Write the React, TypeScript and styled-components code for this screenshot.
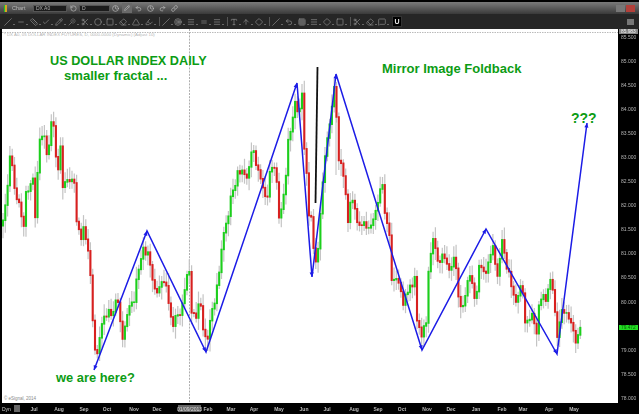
import { Fragment } from "react";
import styled, { createGlobalStyle } from "styled-components";
import {
  ArrowUp, Check, Circle, Clock, Diamond, Equal, Eraser, Grid3x3, Highlighter, Link, Menu, MessageSquare,
  Minus, Pencil, Redo2, RotateCcw, Ruler, Scissors, Slash, Square, Target, Triangle, Type, Undo2, Wand,
} from "lucide-react";

const GlobalStyle = createGlobalStyle`
  html, body { margin: 0; padding: 0; background: #000; overflow: hidden; }
`;

const Page = styled.div`
  width: 639px;
  height: 414px;
  display: flex;
  flex-direction: column;
  font-family: "Liberation Sans", Arial, sans-serif;
  background: #000;
  overflow: hidden;
`;

const TitleBar = styled.div`
  height: 12px;
  margin-top: 2px;
  display: flex;
  align-items: center;
  padding: 0 3px 0 4px;
  background: linear-gradient(#7a7a7a, #3a3a3a);
  filter: blur(0.3px);
`;

const ChartBadge = styled.span`
  width: 3px;
  height: 7px;
  margin-right: 5px;
  background: linear-gradient(90deg, #1fc52a 50%, #d9a521 50%);
`;

const ChartName = styled.span`
  width: 21px;
  font-size: 5.5px;
  color: #b8b8b8;
`;

const Field = styled.span<{ $w: number }>`
  width: ${({ $w }) => $w}px;
  height: 7px;
  box-sizing: border-box;
  padding-left: 2px;
  display: flex;
  align-items: center;
  font-size: 5px;
  color: #b0b0b0;
  background: #1c1c1c;
  border: 1px solid #555;
`;

const BarIcon = styled.span<{ $w: number; $on?: boolean }>`
  width: ${({ $w }) => $w}px;
  height: 10px;
  display: flex;
  align-items: center;
  justify-content: center;
  color: #c8c8c8;
  background: ${({ $on }) => ($on ? "#6a6a6a" : "transparent")};
`;

const Spacer = styled.span`
  flex: 1;
`;

const WinButton = styled.span<{ $close?: boolean }>`
  width: 9px;
  height: 7px;
  margin-right: 1px;
  background: ${({ $close }) => ($close ? "#b3403a" : "#777")};
`;

const ToolRow = styled.div`
  height: 15px;
  display: flex;
  align-items: center;
  padding-left: 4px;
  background: #262626;
  filter: blur(0.3px);
`;

const Tool = styled.span`
  width: 12.8px;
  height: 10px;
  flex: none;
  display: flex;
  align-items: center;
  color: #9a9a9a;
`;

const Caret = styled.i`
  width: 0;
  height: 0;
  margin: 5px 0 0 1px;
  border-left: 1px solid transparent;
  border-right: 1px solid transparent;
  border-top: 1.5px solid #aaa;
`;

const ToolDivider = styled.span`
  width: 1px;
  height: 9px;
  margin: 0 2px 0 1px;
  flex: none;
  background: #555;
`;

const MagnetBox = styled.span`
  width: 8px;
  height: 9px;
  margin-left: 1px;
  display: flex;
  align-items: center;
  justify-content: center;
  font-size: 7px;
  font-weight: bold;
  color: #eee;
  background: #000;
  border: 1px solid #333;
`;

const CornerIcon = styled.span`
  width: 7px;
  height: 6px;
  margin-right: 5px;
  background: #777;
`;

const Middle = styled.div`
  height: 374px;
  display: flex;
  padding-left: 2px;
`;

const ChartArea = styled.div`
  position: relative;
  width: 616px;
  height: 374px;
  background: #fff;
  overflow: hidden;
`;

const ChartSvg = styled.svg`
  display: block;
  filter: blur(0.3px);
`;

const SeriesTitle = styled.div`
  position: absolute;
  top: 3px;
  left: 2px;
  font-size: 4.4px;
  color: #b5b5b5;
  white-space: nowrap;
`;

const Copyright = styled.div`
  position: absolute;
  left: 2px;
  bottom: 2px;
  font-size: 4.5px;
  color: #8a8a8a;
`;

const Note = styled.div<{ $x: number; $y: number; $size: number }>`
  position: absolute;
  left: ${({ $x }) => $x}px;
  top: ${({ $y }) => $y}px;
  font-size: ${({ $size }) => $size}px;
  line-height: 1;
  font-weight: bold;
  color: #0c9c14;
  white-space: nowrap;
`;

const PriceAxis = styled.div`
  position: relative;
  flex: 1;
  background: #000;
  filter: blur(0.25px);
`;

const PriceList = styled.div`
  margin-top: -4px;
`;

const PriceLabel = styled.div`
  height: 24.1px;
  padding-left: 3px;
  display: flex;
  align-items: center;
  font-size: 5px;
  line-height: 5px;
  color: #b5b5b5;
`;

const PriceTag = styled.div<{ $y: number; $bg: string; $fg: string }>`
  position: absolute;
  left: 1px;
  right: 1px;
  top: ${({ $y }) => $y}px;
  height: 5px;
  padding-left: 2px;
  display: flex;
  align-items: center;
  font-size: 4.8px;
  line-height: 5px;
  color: ${({ $fg }) => $fg};
  background: ${({ $bg }) => $bg};
`;

const TimeAxis = styled.div`
  height: 11px;
  display: flex;
  align-items: center;
  color: #b8b8b8;
  font-size: 5px;
  font-weight: bold;
  filter: blur(0.2px);
`;

const DynButton = styled.span`
  width: 12px;
  padding-left: 2px;
  font-size: 5px;
  font-weight: normal;
  color: #ccc;
`;

const ZoomButton = styled.span`
  width: 6px;
  height: 7px;
  background: #666;
`;

const Tick = styled.span<{ $gap: number; $tag?: boolean }>`
  width: ${({ $tag }) => ($tag ? 23 : 16)}px;
  height: 7px;
  margin-left: ${({ $gap }) => $gap}px;
  flex: none;
  display: flex;
  align-items: center;
  justify-content: center;
  font-weight: ${({ $tag }) => ($tag ? "normal" : "bold")};
  color: ${({ $tag }) => ($tag ? "#ddd" : "#b8b8b8")};
  background: ${({ $tag }) => ($tag ? "#666" : "transparent")};
`;

type Pt = [number, number];

// rough trace of the closes, in page pixels
const trace: Pt[] = [
  [3, 225], [5, 203], [7, 190], [9, 157], [11, 158], [13, 177], [16, 193], [19, 205], [24, 223], [26, 193], [30, 180],
  [33, 172], [35, 220], [37, 172], [40, 140], [44, 130], [48, 160], [50, 138], [53, 110], [56, 163], [59, 173], [60, 142],
  [63, 193], [67, 178], [72, 178], [75, 190], [77, 223], [80, 240], [84, 225], [87, 240], [90, 262], [91, 290], [92, 305],
  [94, 340], [96, 353], [99, 340], [104, 320], [107, 310], [112, 320], [115, 305], [117, 300], [120, 320], [122, 347],
  [125, 320], [128, 305], [131, 295], [134, 305], [136, 275], [140, 265], [143, 250], [147, 250], [152, 270], [155, 295],
  [160, 280], [163, 290], [165, 270], [170, 310], [173, 320], [176, 320], [180, 315], [185, 290], [187, 278], [190, 275],
  [192, 315], [197, 315], [200, 300], [205, 338], [208, 335], [212, 315], [216, 290], [220, 262], [223, 233], [228, 217],
  [232, 193], [237, 173], [242, 167], [247, 173], [252, 148], [257, 167], [262, 183], [267, 210], [268, 177], [275, 167],
  [278, 200], [280, 223], [283, 193], [286, 173], [288, 140], [292, 117], [295, 100], [298, 120], [302, 97], [303, 140],
  [307, 173], [308, 207], [312, 225], [315, 270], [319, 245], [322, 187], [325, 160], [328, 133], [332, 103], [335, 82],
  [338, 160], [340, 160], [343, 173], [347, 200], [348, 217], [353, 193], [357, 227], [363, 220], [370, 233], [377, 207],
  [382, 177], [385, 220], [390, 233], [392, 287], [397, 277], [403, 303], [410, 290], [415, 280], [417, 323], [422, 340],
  [427, 313], [428, 270], [433, 240], [438, 260], [443, 250], [448, 272], [455, 260], [460, 307], [465, 297], [470, 273],
  [475, 300], [480, 263], [485, 277], [492, 243], [497, 280], [502, 240], [508, 270], [515, 300], [522, 287], [525, 317],
  [533, 317], [537, 333], [539, 303], [545, 297], [552, 280], [555, 313], [557, 333], [560, 317], [565, 307], [570, 315],
  [573, 327], [577, 343], [579, 332], [581, 329],
];

const legs: Pt[] = [
  [94, 370], [147, 231], [206, 352], [297, 83], [312, 277], [336, 74], [422, 350], [486, 229], [557, 354], [587, 123],
];

// fixed little generator so the bars come out the same every time
let seed = 41;
const rnd = () => {
  seed = (seed * 16807) % 2147483647;
  return seed / 2147483647;
};

const closeAt = (x: number) => {
  for (let i = 1; i < trace.length; i++) {
    if (x <= trace[i][0]) {
      const [x0, y0] = trace[i - 1];
      const [x1, y1] = trace[i];
      return y0 + ((x - x0) / (x1 - x0)) * (y1 - y0);
    }
  }
  return trace[trace.length - 1][1];
};

const candles = (() => {
  const out: { x: number; top: number; bottom: number; hi: number; lo: number; up: boolean }[] = [];
  let prev = closeAt(3);
  for (let x = 3; x <= 581; x += 2.3) {
    const close = closeAt(x) + (rnd() - 0.5) * 11;
    const top = Math.min(prev, close);
    const bottom = Math.max(prev, close) + 1.5;
    out.push({ x, top, bottom, hi: top - 3 - rnd() * 9, lo: bottom + 3 + rnd() * 9, up: close < prev });
    prev = close;
  }
  return out;
})();

const arrowHead = (a: Pt, b: Pt) => {
  const ang = Math.atan2(b[1] - a[1], b[0] - a[0]);
  const l = 5;
  const w = 0.42;
  const p1 = [b[0] - l * Math.cos(ang - w), b[1] - l * Math.sin(ang - w)];
  const p2 = [b[0] - l * Math.cos(ang + w), b[1] - l * Math.sin(ang + w)];
  return `${b[0]},${b[1]} ${p1[0]},${p1[1]} ${p2[0]},${p2[1]}`;
};

const tools = [
  [Slash, Minus, Ruler, Check, Pencil, Wand, Scissors, Circle, Square, Eraser, Triangle, Highlighter],
  [Slash, Target, Menu, Equal, Menu],
  [Type, ArrowUp, Diamond],
  [Slash, Undo2, Grid3x3, Menu, Diamond, Square],
  [Scissors, Eraser, MessageSquare],
];

const prices = ["85.500", "85.000", "84.500", "84.000", "83.500", "83.000", "82.500", "82.000", "81.500", "81.000",
  "80.500", "80.000", "", "79.000", "78.500", "78.000"];

// label and the page x of its centre
const ticks: [string, number][] = [
  ["Jul", 34], ["Aug", 59], ["Sep", 84], ["Oct", 107], ["Nov", 134], ["Dec", 157], ["01/09/2013", 189.5], ["Feb", 208],
  ["Mar", 231], ["Apr", 254], ["May", 279], ["Jun", 304], ["Jul", 327], ["Aug", 354], ["Sep", 378], ["Oct", 402],
  ["Nov", 427], ["Dec", 451], ["Jan", 476], ["Feb", 502], ["Mar", 523], ["Apr", 549], ["May", 574],
];

let axisEnd = 20;
const placedTicks = ticks.map(([label, centre]) => {
  const tag = label.includes("/");
  const half = tag ? 11.5 : 8;
  const gap = centre - half - axisEnd;
  axisEnd = centre + half;
  return { label, gap, tag };
});

export default function App() {
  return (
    <Page>
      <GlobalStyle />
      <TitleBar>
        <ChartBadge />
        <ChartName>Chart</ChartName>
        <Field $w={34}>DX A0</Field>
        <BarIcon $w={12}><RotateCcw size={7} /></BarIcon>
        <Field $w={31}>D</Field>
        <BarIcon $w={10}><Clock size={7} /></BarIcon>
        <BarIcon $w={2} />
        <BarIcon $w={10} $on><Pencil size={6} /></BarIcon>
        <BarIcon $w={12}><Undo2 size={7} /></BarIcon>
        <BarIcon $w={13}><Clock size={7} /></BarIcon>
        <BarIcon $w={11}><Redo2 size={7} /></BarIcon>
        <BarIcon $w={13}><Link size={7} /></BarIcon>
        <Spacer />
        <WinButton />
        <WinButton $close />
      </TitleBar>
      <ToolRow>
        {tools.map((group, g) => (
          <Fragment key={g}>
            {g > 0 && <ToolDivider />}
            {group.map((Icon, i) => (
              <Tool key={i}>
                <Icon size={8} strokeWidth={1.8} />
                <Caret />
              </Tool>
            ))}
          </Fragment>
        ))}
        <MagnetBox>U</MagnetBox>
        <Spacer />
        <CornerIcon />
      </ToolRow>
      <Middle>
        <ChartArea>
          <ChartSvg width={616} height={374} viewBox="2 29 616 374">
            <line x1={2} x2={618} y1={32.5} y2={32.5} stroke="#aaa" strokeWidth={0.8} strokeDasharray="1.5 1" />
            <line x1={189.5} x2={189.5} y1={29} y2={403} stroke="#999" strokeWidth={0.8} strokeDasharray="2 1.2" />
            {candles.map((c, i) => (
              <line key={i} x1={c.x} x2={c.x} y1={c.hi} y2={c.lo} stroke="#c4c4c4" strokeWidth={1.2} />
            ))}
            <line x1={336} x2={336} y1={100} y2={175} stroke="#bdbdbd" strokeWidth={1} />
            {candles.map((c, i) => (
              <rect key={i} x={c.x - 1.05} y={c.top} width={2.1} height={c.bottom - c.top} fill={c.up ? "#1ccf1c" : "#d8201f"} />
            ))}
            <line x1={317.5} x2={315.5} y1={67} y2={203} stroke="#111" strokeWidth={1.8} />
            <polyline
              points={legs.map((p) => p.join(",")).join(" ")}
              fill="none"
              stroke="#1c1ce6"
              strokeWidth={1.5}
              strokeLinejoin="miter"
            />
            {legs.slice(1).map((p, i) => (
              <polygon key={i} points={arrowHead(legs[i], p)} fill="#1c1ce6" />
            ))}
            <polygon points={arrowHead(legs[1], legs[0])} fill="#1c1ce6" />
          </ChartSvg>
          <SeriesTitle>* DX A0, 05 DOLLAR INDEX FUTURES, D, 0000-0000 (Dynamic) (Adjust 10)</SeriesTitle>
          <Note $x={48} $y={26} $size={12.7}>US DOLLAR INDEX DAILY</Note>
          <Note $x={62} $y={40} $size={13.1}>smaller fractal ...</Note>
          <Note $x={380} $y={33} $size={13}>Mirror Image Foldback</Note>
          <Note $x={54} $y={343} $size={12.9}>we are here?</Note>
          <Note $x={569} $y={82} $size={14}>???</Note>
          <Copyright>© eSignal, 2014</Copyright>
        </ChartArea>
        <PriceAxis>
          <PriceList>
            {prices.map((p, i) => (
              <PriceLabel key={i}>{p}</PriceLabel>
            ))}
          </PriceList>
          <PriceTag $y={0} $bg="#888" $fg="#eee">85.983</PriceTag>
          <PriceTag $y={296} $bg="#22dd22" $fg="#0a5a0a">79.472</PriceTag>
        </PriceAxis>
      </Middle>
      <TimeAxis>
        <DynButton>Dyn</DynButton>
        <ZoomButton />
        {placedTicks.map(({ label, gap, tag }, i) => (
          <Tick key={i} $gap={gap} $tag={tag}>{label}</Tick>
        ))}
      </TimeAxis>
    </Page>
  );
}
